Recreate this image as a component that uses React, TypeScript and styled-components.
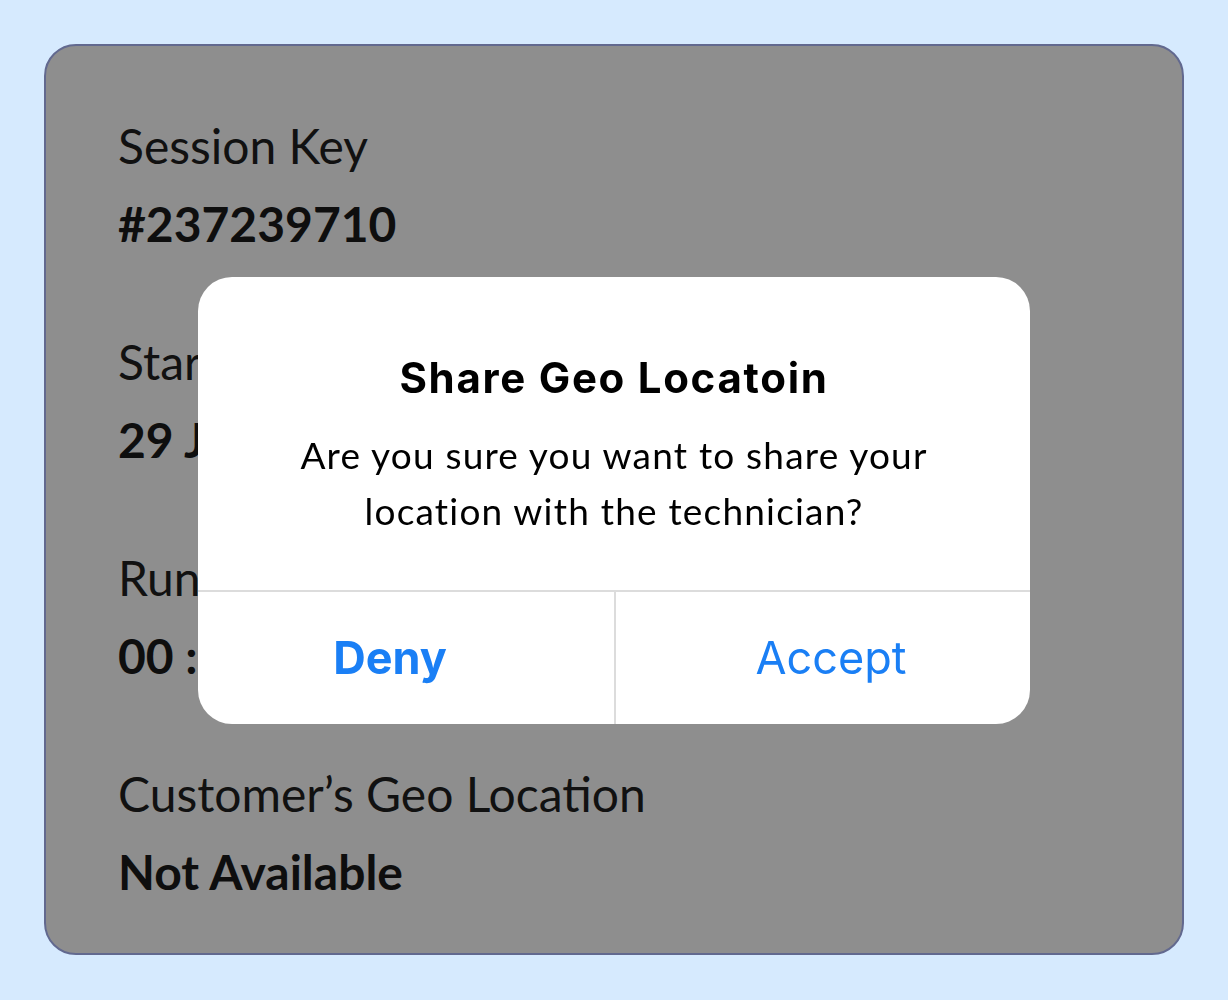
import styled, { createGlobalStyle } from "styled-components";

const GlobalStyle = createGlobalStyle`
  html, body {
    margin: 0;
    padding: 0;
    background: #d6eafe;
  }
  body {
    font-family: Lato, "Noto Sans", sans-serif;
  }
`;

const Page = styled.main`
  width: 1228px;
  height: 1000px;
  box-sizing: border-box;
  padding: 44px;
`;

const Card = styled.section`
  box-sizing: border-box;
  height: 911px;
  background: #8e8e8e;
  border: 2px solid #62698f;
  border-radius: 32px;
  padding: 74px 72px 0;
  display: flex;
  flex-direction: column;
  gap: 86px;
`;

const Field = styled.div`
  display: flex;
  flex-direction: column;
  gap: 26px;
`;

const Label = styled.span`
  font-size: 48px;
  line-height: 52px;
  color: #111;
`;

const Value = styled.span`
  font-size: 48px;
  line-height: 52px;
  font-weight: 700;
  color: #0e0e0e;
`;

const Overlay = styled.div`
  position: fixed;
  inset: 0;
  display: flex;
  align-items: center;
  justify-content: center;
`;

const Dialog = styled.div`
  width: 832px;
  background: #fff;
  border-radius: 34px;
  overflow: hidden;
  display: flex;
  flex-direction: column;
`;

const Body = styled.div`
  height: 313px;
  box-sizing: border-box;
  padding-top: 75px;
  text-align: center;
`;

const Title = styled.h2`
  margin: 0 0 23px;
  font-family: Inter, "Noto Sans", sans-serif;
  font-size: 42px;
  line-height: 52px;
  letter-spacing: 1.7px;
  font-weight: 700;
  color: #000;
`;

const Message = styled.p`
  margin: 0;
  font-size: 37px;
  line-height: 56px;
  letter-spacing: 1.2px;
  color: #000;
`;

const Actions = styled.div`
  display: grid;
  grid-template-columns: 1fr 1fr;
  border-top: 2px solid #dcdcdc;
`;

const ActionButton = styled.button<{ $primary?: boolean }>`
  height: 132px;
  padding: ${(p) => (p.$primary ? "0 32px 0 0" : "0 0 0 16px")};
  border: 0;
  background: transparent;
  font-family: Inter, "Noto Sans", sans-serif;
  font-size: 45px;
  font-weight: ${(p) => (p.$primary ? 700 : 400)};
  color: #1a7ff5;
  cursor: pointer;

  & + & {
    border-left: 2px solid #dcdcdc;
  }
`;

const fields = [
  { label: "Session Key", value: "#237239710" },
  { label: "Start Time", value: "29 Jul 2024, 10:42 AM" },
  { label: "Running Time", value: "00 : 12 : 36" },
  { label: "Customer’s Geo Location", value: "Not Available" },
];

export default function App() {
  return (
    <>
      <GlobalStyle />
      <Page>
        <Card>
          {fields.map((f) => (
            <Field key={f.label}>
              <Label>{f.label}</Label>
              <Value>{f.value}</Value>
            </Field>
          ))}
        </Card>
      </Page>
      <Overlay>
        <Dialog role="dialog">
          <Body>
            <Title>Share Geo Locatoin</Title>
            <Message>
              Are you sure you want to share your
              <br />
              location with the technician?
            </Message>
          </Body>
          <Actions>
            <ActionButton $primary>Deny</ActionButton>
            <ActionButton>Accept</ActionButton>
          </Actions>
        </Dialog>
      </Overlay>
    </>
  );
}
